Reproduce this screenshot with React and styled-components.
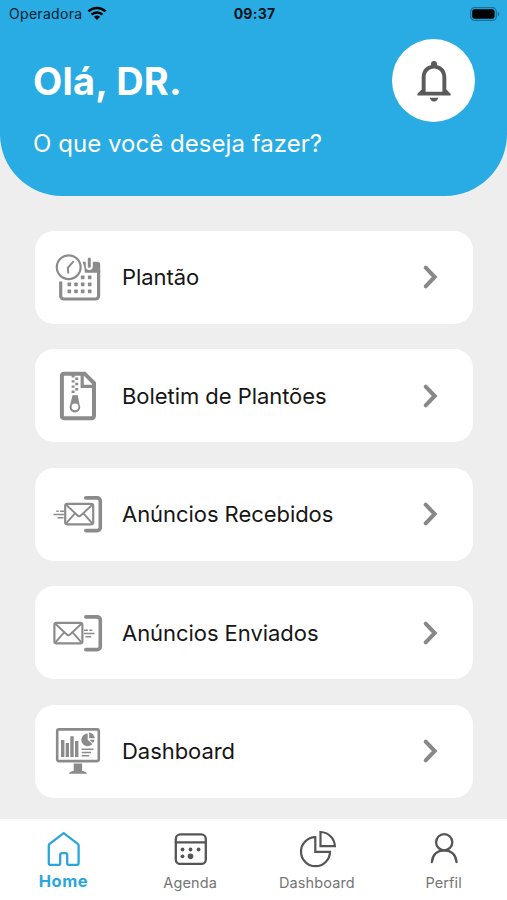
import styled, { createGlobalStyle } from "styled-components";

const GlobalStyle = createGlobalStyle`
  * {
    box-sizing: border-box;
  }

  body {
    margin: 0;
    background: #eeeeee;
    font-family: Inter, "Liberation Sans", sans-serif;
  }

  h1, p {
    margin: 0;
  }

  svg {
    display: block;
    flex: none;
  }
`;

const Screen = styled.div`
  display: flex;
  flex-direction: column;
  height: 900px;
  background: #eeeeee;
  overflow: hidden;
`;

const Header = styled.header`
  height: 196px;
  flex: none;
  background: #29abe4;
  border-radius: 0 0 62px 62px;
`;

const StatusBar = styled.div`
  display: grid;
  grid-template-columns: 1fr auto 1fr;
  align-items: center;
  height: 27px;
  padding: 0 7px 0 9px;
  color: #06202c;
  font-size: 14px;
`;

const Carrier = styled.div`
  display: flex;
  align-items: center;
  gap: 5px;
  letter-spacing: 0.3px;
`;

const Clock = styled.div`
  color: #04141c;
  font-weight: 700;
  letter-spacing: 0.25px;
`;

const Battery = styled.div`
  display: flex;
  justify-content: flex-end;
`;

const Greeting = styled.div`
  display: flex;
  justify-content: space-between;
  padding: 12px 32px 0 33px;
  color: #ffffff;

  h1 {
    margin-top: 19px;
    font-size: 38px;
    line-height: 46px;
    font-weight: 700;
    letter-spacing: 0.2px;
  }

  p {
    margin-top: 25px;
    font-size: 24px;
    line-height: 30px;
    letter-spacing: 0.04px;
  }
`;

const BellButton = styled.button`
  display: flex;
  align-items: center;
  justify-content: center;
  width: 83px;
  height: 83px;
  padding: 0;
  border: none;
  border-radius: 50%;
  background: #ffffff;
  color: #5a5a5a;
`;

const Menu = styled.main`
  flex: 1;
  display: flex;
  flex-direction: column;
  gap: 25.5px;
  padding: 34.5px 34px 0 35px;
`;

const Card = styled.button`
  display: flex;
  align-items: center;
  flex: none;
  height: 93px;
  padding: 0 31px 0 18px;
  border: none;
  border-radius: 19px;
  background: #ffffff;
  color: #8b8b8b;
  font-family: inherit;
  text-align: left;
`;

const CardLabel = styled.span`
  flex: 1;
  margin-left: 19px;
  color: #161616;
  font-size: 22px;
  letter-spacing: -0.05px;
`;

const TabBar = styled.nav`
  display: grid;
  grid-template-columns: repeat(4, 1fr);
  flex: none;
  height: 81px;
  background: #ffffff;
`;

const Tab = styled.a`
  display: flex;
  flex-direction: column;
  align-items: center;
  padding-top: 10px;
  color: ${({ $active }) => ($active ? "#2ba6dc" : "#555555")};

  span {
    margin-top: ${({ $active }) => ($active ? "2px" : "4px")};
    color: ${({ $active }) => ($active ? "#2ba6dc" : "#757575")};
    font-size: ${({ $active }) => ($active ? "16.5px" : "14.5px")};
    font-weight: ${({ $active }) => ($active ? 700 : 400)};
    line-height: 20px;
    letter-spacing: ${({ $active }) => ($active ? "0.5px" : "0.1px")};
  }
`;

const WifiIcon = () => (
  <svg width="20" height="15" viewBox="0 0 20 15" fill="none" stroke="#000" strokeWidth="2.5">
    <path d="M1.4 5.4C6.3.7 13.7.7 18.6 5.4" />
    <path d="M4.5 8.7c3.1-3 7.9-3 11 0" />
    <path d="M6.9 10.8c1.8-1.7 4.4-1.7 6.2 0L10 14z" fill="#000" stroke="none" />
  </svg>
);

const BatteryIcon = () => (
  <svg width="30" height="14" viewBox="0 0 30 14">
    <rect x="0.7" y="0.7" width="25.6" height="12.6" rx="3.8" fill="none" stroke="#1b6f94" strokeWidth="1.2" />
    <rect x="2.2" y="2.2" width="22.4" height="9.6" rx="2.2" fill="#000" />
    <path d="M27.8 4.7c2 .8 2 3.8 0 4.6z" fill="#1b6f94" />
  </svg>
);

const BellIcon = () => (
  <svg width="36" height="42" viewBox="0 0 36 42" fill="currentColor">
    <circle cx="18" cy="4" r="3" />
    <path
      fillRule="evenodd"
      d="M18 4.7c7.4 0 12.3 5 12.3 12.5v12.3l4.3 4.2v1.8H1.4v-1.8l4.3-4.2V17.2C5.7 9.7 10.6 4.7 18 4.7zm0 3.8c-4.9 0-8.4 3.5-8.4 8.7v14.5h16.8V17.2c0-5.2-3.5-8.7-8.4-8.7z"
    />
    <path d="M13.8 37.7h8.4c-.4 2.3-2 3.8-4.2 3.8s-3.800-1.500-4.200-3.800z" />
  </svg>
);

const ShiftIcon = () => (
  <svg width="50" height="50" viewBox="0 0 50 50" fill="none" stroke="currentColor">
    <path d="M7.700 29.500v14.500a3 3 0 0 0 3 3h31.900a3 3 0 0 0 3-3V18" strokeWidth="3.200" />
    <path
      d="M29.500 9.800h3.300v4.900c0 4.400 7 4.400 7 0V9.800h4.400a3 3 0 0 1 3 3v7.900H31.800c0-3.900-.7-7.200-2.300-10.900z"
      fill="currentColor"
      stroke="none"
    />
    <path d="M36.300 7v7.200" strokeWidth="3" strokeLinecap="round" />
    <circle cx="15.700" cy="15.200" r="11.900" strokeWidth="2.200" />
    <path d="M20.700 9.200l-5.900 6.600.5 5.700" strokeWidth="2" />
    <g fill="currentColor" stroke="none">
      {[
        [29.7, 25.4], [36.7, 25.4],
        [16.3, 32.4], [23, 32.4], [29.7, 32.4], [36.7, 32.4],
        [16.3, 39.400], [23, 39.400], [29.700, 39.400], [36.700, 39.400],
      ].map(([x, y]) => (
        <rect key={`${x}-${y}`} x={x - 1.8} y={y - 1.8} width="3.6" height="3.6" rx="0.6" />
      ))}
    </g>
  </svg>
);

const ZipFileIcon = () => (
  <svg width="50" height="50" viewBox="0 0 50 50" fill="none" stroke="currentColor" strokeWidth="4">
    <path d="M11 2.7h20.500L41 12.200V45a2.200 2.200 0 0 1-2.200 2.200H11A2.200 2.200 0 0 1 8.900 45V4.900A2.200 2.200 0 0 1 11 2.700z" />
    <path d="M29.200 3v12.300H41" strokeWidth="3.200" />
    <path
      d="M18.600 5.200h3M22.200 7.800h3M18.600 10.400h3M22.200 13h3M18.600 15.600h3M22.200 18.200h3M18.600 20.800h3"
      strokeWidth="2.400"
    />
    <path
      fillRule="evenodd"
      stroke="none"
      fill="currentColor"
      d="M19.500 24.300h5.200l1.900 9.500a5.300 5.300 0 1 1-9.400 0zM22 32.400a3.400 3.400 0 1 0 0 6.800 3.400 3.400 0 0 0 0-6.800z"
    />
  </svg>
);

const MailIcon = ({ sent }) => (
  <svg width="50" height="50" viewBox="0 0 50 50" fill="none" stroke="currentColor">
    <path
      d="M32.800 8.900h11.300a3.200 3.200 0 0 1 3.200 3.200v26.300a3.200 3.200 0 0 1-3.200 3.200H32.800"
      strokeWidth="3.600"
      strokeLinecap="round"
    />
    <g transform={sent ? "translate(-10.8 0)" : undefined}>
      <rect x="12.200" y="14.800" width="28" height="20.600" rx="2.200" strokeWidth="2.200" />
      <path d="M13.400 16l11.200 10.500c1 .9 2.200.9 3.200 0L39 16M13.400 34.200l8.800-10M39 34.200l-8.800-10" strokeWidth="1.900" />
    </g>
    {sent ? (
      <path d="M31 22.200h4M36.300 22.200h3M31 25.500h10.500M32.500 28.800h5.700" strokeWidth="1.600" />
    ) : (
      <path d="M3.300 22.200h2.500M7 22.200h4M.5 25.500H11M4.500 28.800h6" strokeWidth="1.600" />
    )}
  </svg>
);

const MonitorIcon = () => (
  <svg width="50" height="50" viewBox="0 0 50 50" fill="currentColor">
    <rect x="4.200" y="3.400" width="41.600" height="31.700" rx="1.800" fill="none" stroke="currentColor" strokeWidth="2.600" />
    <path d="M20.700 37.500h8.400v7.300c2.500.4 4.100 1.200 5 3H15.800c.9-1.800 2.500-2.600 4.900-3z" />
    <path d="M8 14h3.400v17H8zM12.700 17H16v14h-3.300zM17.300 10.300h3.400V31h-3.400zM22 15h3.400v16H22z" />
    <path d="M34.700 7.600v6.200l4.700 4.200a6.300 6.300 0 1 1-4.700-10.400z" />
    <path d="M36.200 6.600a6 6 0 0 1 5.600 5.700h-5.600zM36.500 13.800h5a6 6 0 0 1-1.600 3.300z" />
    <path d="M28.700 23.200h11.800M28.700 26.500h9.300M28.700 29.800h7.500" stroke="currentColor" strokeWidth="1.600" />
  </svg>
);

const ChevronIcon = () => (
  <svg width="24" height="30" viewBox="0 0 24 30" fill="none" stroke="#888888" strokeWidth="4" strokeLinecap="round">
    <path d="M7.700 5.700l9 9.300-9 9.300" />
  </svg>
);

const TabIcon = ({ children }) => (
  <svg
    width="40"
    height="40"
    viewBox="0 0 40 40"
    fill="none"
    stroke="currentColor"
    strokeWidth="2.3"
    strokeLinecap="round"
    strokeLinejoin="round"
  >
    {children}
  </svg>
);

const cards = [
  { label: "Plantão", icon: <ShiftIcon /> },
  { label: "Boletim de Plantões", icon: <ZipFileIcon /> },
  { label: "Anúncios Recebidos", icon: <MailIcon /> },
  { label: "Anúncios Enviados", icon: <MailIcon sent /> },
  { label: "Dashboard", icon: <MonitorIcon /> },
];

const tabs = [
  {
    label: "Home",
    active: true,
    icon: (
      <path d="M20.700 4.200L6.600 14.800c-.6.500-.8.900-.8 1.700v17.400a2 2 0 0 0 2 2h7.400a2 2 0 0 0 2-2v-7.800a2 2 0 0 1 2-2h3a2 2 0 0 1 2 2v7.800a2 2 0 0 0 2 2h7.400a2 2 0 0 0 2-2V16.500c0-.8-.2-1.200-.8-1.700z" />
    ),
  },
  {
    label: "Agenda",
    icon: (
      <>
        <rect x="5.800" y="5.400" width="30" height="29.500" rx="4.500" />
        <path d="M5.800 13.300h30" />
        <g fill="currentColor" stroke="none">
          <circle cx="12.500" cy="20.500" r="1.900" />
          <circle cx="20.500" cy="20.500" r="1.900" />
          <circle cx="28.600" cy="20.500" r="1.900" />
          <circle cx="12.500" cy="27.300" r="1.900" />
          <circle cx="20.500" cy="27.300" r="2.800" />
        </g>
      </>
    ),
  },
  {
    label: "Dashboard",
    icon: (
      <g strokeWidth="2.200" strokeLinejoin="miter">
        <path d="M18.300 8.200a14.500 14.500 0 1 0 14.700 14.600H18.300z" />
        <path d="M23.500 3v14.200h14.400C37.500 9 31.500 3.400 23.500 3z" />
      </g>
    ),
  },
  {
    label: "Perfil",
    icon: (
      <>
        <circle cx="20.200" cy="13.200" r="8.100" />
        <path d="M7.900 33c.7-7.300 5.300-11.700 12.300-11.700S31.800 25.700 32.500 33" />
      </>
    ),
  },
];

const App = () => {
  return (
    <>
      <GlobalStyle />
      <Screen>
        <Header>
          <StatusBar>
            <Carrier>
              Operadora
              <WifiIcon />
            </Carrier>
            <Clock>09:37</Clock>
            <Battery>
              <BatteryIcon />
            </Battery>
          </StatusBar>
          <Greeting>
            <div>
              <h1>Olá, DR.</h1>
              <p>O que você deseja fazer?</p>
            </div>
            <BellButton aria-label="Notificações">
              <BellIcon />
            </BellButton>
          </Greeting>
        </Header>

        <Menu>
          {cards.map(({ label, icon }) => (
            <Card key={label}>
              {icon}
              <CardLabel>{label}</CardLabel>
              <ChevronIcon />
            </Card>
          ))}
        </Menu>

        <TabBar>
          {tabs.map(({ label, icon, active }) => (
            <Tab key={label} $active={active}>
              <TabIcon>{icon}</TabIcon>
              <span>{label}</span>
            </Tab>
          ))}
        </TabBar>
      </Screen>
    </>
  );
};

export default App;
